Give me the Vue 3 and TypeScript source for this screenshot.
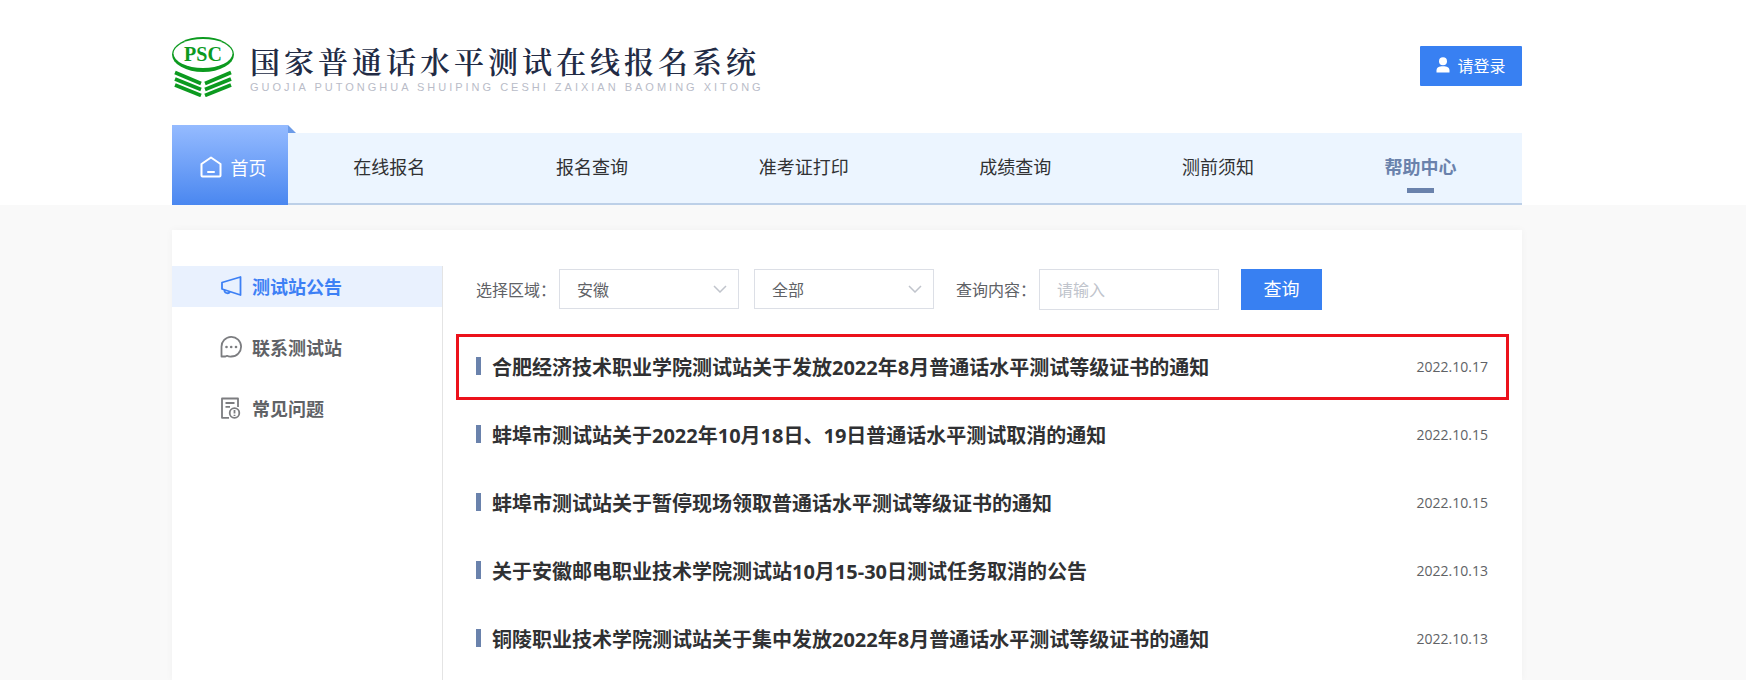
<script setup lang="ts">
import { ref } from 'vue'

interface Notice {
  title: string
  date: string
  marked?: boolean
}

const navItems: string[] = ['在线报名', '报名查询', '准考证打印', '成绩查询', '测前须知', '帮助中心']
const currentNav = '帮助中心'

const area = ref('安徽')
const station = ref('全部')
const keyword = ref('')

const notices: Notice[] = [
  { title: '合肥经济技术职业学院测试站关于发放2022年8月普通话水平测试等级证书的通知', date: '2022.10.17', marked: true },
  { title: '蚌埠市测试站关于2022年10月18日、19日普通话水平测试取消的通知', date: '2022.10.15' },
  { title: '蚌埠市测试站关于暂停现场领取普通话水平测试等级证书的通知', date: '2022.10.15' },
  { title: '关于安徽邮电职业技术学院测试站10月15-30日测试任务取消的公告', date: '2022.10.13' },
  { title: '铜陵职业技术学院测试站关于集中发放2022年8月普通话水平测试等级证书的通知', date: '2022.10.13' },
]
</script>

<template>
  <div class="page">
    <header class="header">
      <div class="brand-row">
        <a class="brand" href="#">
          <svg class="brand-mark" viewBox="0 0 62 60" aria-hidden="true">
            <ellipse cx="31" cy="17.500" rx="31" ry="17.500" fill="#0c9a1f" />
            <ellipse cx="31" cy="16.500" rx="29.500" ry="14.500" fill="#fff" />
            <text x="31" y="24" text-anchor="middle" font-family="Liberation Serif, serif" font-weight="700" font-size="20" fill="#0c9a1f">PSC</text>
            <g fill="none" stroke="#0c9a1f" stroke-width="3.600">
              <path d="M3 35.500 L29 46.500" />
              <path d="M3 42 L29 52.500" />
              <path d="M3 48 L29 58.500" />
              <path d="M59 35.500 L33 46.500" />
              <path d="M59 42 L33 52.500" />
              <path d="M59 48 L33 58.500" />
            </g>
          </svg>
          <span class="brand-text">
            <strong class="brand-name">国家普通话水平测试在线报名系统</strong>
            <span class="brand-latin">GUOJIA PUTONGHUA SHUIPING CESHI ZAIXIAN BAOMING XITONG</span>
          </span>
        </a>
        <button class="login" type="button">
          <svg class="login-icon" viewBox="0 0 14 16" aria-hidden="true">
            <circle cx="7" cy="4.200" r="4" fill="#fff" />
            <path d="M0.500 15.500 V13.500 C0.500 10.500 3 9.300 7 9.300 S13.500 10.500 13.500 13.500 V15.500 Z" fill="#fff" />
          </svg>
          请登录
        </button>
      </div>

      <nav class="nav">
        <a class="nav-home" href="#">
          <svg class="home-icon" viewBox="0 0 22 22" fill="none" stroke="#fff" stroke-width="2" stroke-linejoin="round" stroke-linecap="round" aria-hidden="true">
            <path d="M1.500 8 L11 1.500 L20.500 8 V19.500 Q20.500 20.500 19.500 20.500 H2.500 Q1.500 20.500 1.500 19.500 Z" />
            <path d="M8 16 H14" />
          </svg>
          首页
        </a>
        <div class="nav-links">
          <a v-for="item in navItems" :key="item" class="nav-link" :class="{ current: item === currentNav }" href="#">{{ item }}</a>
        </div>
      </nav>
    </header>

    <main class="main">
      <div class="panel">
        <aside class="side">
          <a class="side-item active" href="#">
            <svg class="side-icon" viewBox="0 0 22 22" fill="none" stroke="currentColor" stroke-width="1.800" stroke-linejoin="round" aria-hidden="true">
              <path d="M2 7.500 L20.500 2 V20 L2 14 Z" />
              <path d="M4.500 14.800 A3 3 0 0 0 10 16.800" />
            </svg>
            测试站公告
          </a>
          <a class="side-item" href="#">
            <svg class="side-icon muted" viewBox="0 0 22 22" fill="none" stroke="currentColor" stroke-width="1.800" stroke-linejoin="round" aria-hidden="true">
              <path d="M1.500 20.500 V11 A9.800 9.800 0 1 1 11.300 20.500 Q9 20.800 7 19.800 L5.500 20.500 Z" />
              <g fill="currentColor" stroke="none">
                <circle cx="6.500" cy="11" r="1.300" />
                <circle cx="11.200" cy="11" r="1.300" />
                <circle cx="16" cy="11" r="1.300" />
              </g>
            </svg>
            联系测试站
          </a>
          <a class="side-item" href="#">
            <svg class="side-icon muted" viewBox="0 0 22 22" fill="none" stroke="currentColor" stroke-width="1.800" stroke-linejoin="round" aria-hidden="true">
              <path d="M9 20.800 H2 V1.500 H18 V10" />
              <path d="M5.500 6 H14.500 M5.500 9.800 H10" />
              <circle cx="14.500" cy="16" r="4.800" />
              <path d="M14.500 13 V16.500 M14.500 17.700 V19" />
            </svg>
            常见问题
          </a>
        </aside>

        <section class="content">
          <form class="filters" @submit.prevent>
            <label class="filter-label" for="area">选择区域：</label>
            <span class="select-box">
              <select id="area" v-model="area" class="field">
                <option>安徽</option>
              </select>
              <svg class="chevron" viewBox="0 0 14 8" fill="none" stroke="#c0c4cc" stroke-width="1.500" aria-hidden="true"><path d="M1 1 L7 7 L13 1" /></svg>
            </span>
            <span class="select-box second">
              <select v-model="station" class="field" aria-label="测试站">
                <option>全部</option>
              </select>
              <svg class="chevron" viewBox="0 0 14 8" fill="none" stroke="#c0c4cc" stroke-width="1.500" aria-hidden="true"><path d="M1 1 L7 7 L13 1" /></svg>
            </span>
            <label class="filter-label" for="keyword">查询内容：</label>
            <input id="keyword" v-model="keyword" class="field query" type="text" placeholder="请输入" />
            <button class="search" type="submit">查询</button>
          </form>

          <ul class="notices">
            <li v-for="notice in notices" :key="notice.title" class="notice" :class="{ marked: notice.marked }">
              <a class="notice-title" href="#">{{ notice.title }}</a>
              <time class="notice-date">{{ notice.date }}</time>
            </li>
          </ul>
        </section>
      </div>
    </main>
  </div>
</template>

<style>
body {
  margin: 0;
}
</style>

<style scoped>
.page {
  display: flex;
  flex-direction: column;
  min-height: 100vh;
  background: #f9f9f9;
  color: #303133;
  font-family: "Noto Sans CJK SC", sans-serif;
  font-size: 16px;
}

.page *,
.page *::before,
.page *::after {
  box-sizing: border-box;
}

a {
  color: inherit;
  text-decoration: none;
}

button,
input,
select {
  margin: 0;
  font: inherit;
}

.header {
  padding: 37px 224px 0 172px;
  background: #fff;
}

.brand-row {
  display: flex;
  justify-content: space-between;
  align-items: flex-start;
  height: 88px;
}

.brand {
  display: flex;
  gap: 16px;
}

.brand-mark {
  width: 62px;
  height: 60px;
}

.brand-text {
  display: flex;
  flex-direction: column;
  padding-top: 3px;
  white-space: nowrap;
}

.brand-name {
  color: #222b45;
  font-family: "Noto Serif CJK SC", "Noto Sans CJK SC", serif;
  font-size: 30px;
  font-weight: 600;
  line-height: 40px;
  letter-spacing: 4px;
}

.brand-latin {
  color: #b9bcc8;
  font-family: "Liberation Sans", Arial, sans-serif;
  font-size: 11px;
  line-height: 14px;
  letter-spacing: 3px;
}

.login {
  display: flex;
  align-items: center;
  justify-content: center;
  gap: 7px;
  width: 102px;
  height: 40px;
  margin-top: 9px;
  padding: 0 0 2px;
  border: 0;
  border-radius: 1px;
  background: #3880f2;
  color: #fff;
}

.login-icon {
  width: 14px;
  height: 16px;
}

.nav {
  display: flex;
  align-items: flex-end;
  font-size: 18px;
}

.nav-home {
  position: relative;
  display: flex;
  align-items: center;
  justify-content: center;
  gap: 9px;
  width: 116px;
  height: 80px;
  padding: 4px 0 0 6px;
  background: linear-gradient(#95bbff, #4a87f0);
  color: #fff;
}

.nav-home::after {
  content: "";
  position: absolute;
  top: 0;
  left: 100%;
  border-bottom: 8px solid #6c9be8;
  border-right: 8px solid transparent;
}

.home-icon {
  width: 22px;
  height: 22px;
}

.nav-links {
  display: flex;
  flex: 1;
  justify-content: space-around;
  height: 72px;
  border-bottom: 2px solid #bdd0e8;
  background: #ecf5ff;
}

.nav-link {
  position: relative;
  line-height: 66px;
}

.nav-link.current {
  color: #6a82ac;
  font-weight: 700;
}

.nav-link.current::after {
  content: "";
  position: absolute;
  bottom: 10px;
  left: calc(50% - 14px);
  width: 27px;
  height: 5px;
  background: #6a82ac;
}

.main {
  display: flex;
  flex: 1;
  padding: 25px 224px 0 172px;
}

.panel {
  display: flex;
  flex: 1;
  padding-top: 36px;
  background: #fff;
  box-shadow: 0 0 8px rgba(0, 0, 0, 0.04);
}

.side {
  display: flex;
  flex-direction: column;
  gap: 20px;
  width: 271px;
  border-right: 1px solid #e4e4e4;
}

.side-item {
  display: flex;
  align-items: center;
  gap: 10px;
  height: 41px;
  padding: 0 0 2px 48px;
  color: #606266;
  font-size: 18px;
  font-weight: 700;
}

.side-item.active {
  background: #e9f1fe;
  color: #3d80f5;
}

.side-icon {
  width: 22px;
  height: 22px;
}

.side-icon.muted {
  color: #7c7d80;
}

.content {
  flex: 1;
  padding: 3px 13px 0;
}

.filters {
  display: flex;
  align-items: flex-start;
  gap: 3px;
  margin-bottom: 22px;
  padding-left: 20px;
  color: #606266;
}

.filter-label {
  line-height: 40px;
}

.select-box {
  position: relative;
}

.second {
  margin: 0 19px 0 12px;
}

.field {
  display: block;
  width: 180px;
  height: 40px;
  padding: 0 17px 1px;
  border: 1px solid #dcdfe6;
  border-radius: 0;
  appearance: none;
  background: #fff;
  color: #606266;
  outline: none;
}

.field.query {
  height: 41px;
}

.field::placeholder {
  color: #c0c4cc;
}

.chevron {
  position: absolute;
  top: 16px;
  right: 12px;
  width: 14px;
  height: 8px;
  pointer-events: none;
}

.search {
  width: 81px;
  height: 41px;
  margin-left: 19px;
  padding: 0 0 4px;
  border: 0;
  background: #3880f2;
  color: #fff;
  font-size: 18px;
}

.notices {
  margin: 0;
  padding: 0;
  list-style: none;
}

.notice {
  display: flex;
  align-items: center;
  height: 68px;
  padding: 0 21px 0 20px;
}

.notice::before {
  content: "";
  width: 5px;
  height: 18px;
  margin-right: 11px;
  background: #6a82ac;
}

.notice.marked {
  position: relative;
}

.notice.marked::after {
  content: "";
  position: absolute;
  inset: 2px 0 0;
  border: 3px solid #ec111b;
  pointer-events: none;
}

.notice-title {
  flex: 1;
  font-family: "Open Sans", "Noto Sans CJK SC", sans-serif;
  font-size: 20px;
  font-weight: 700;
}

.notice-date {
  color: #606266;
  font-family: "Open Sans", "Noto Sans", sans-serif;
  font-size: 14px;
}
</style>
